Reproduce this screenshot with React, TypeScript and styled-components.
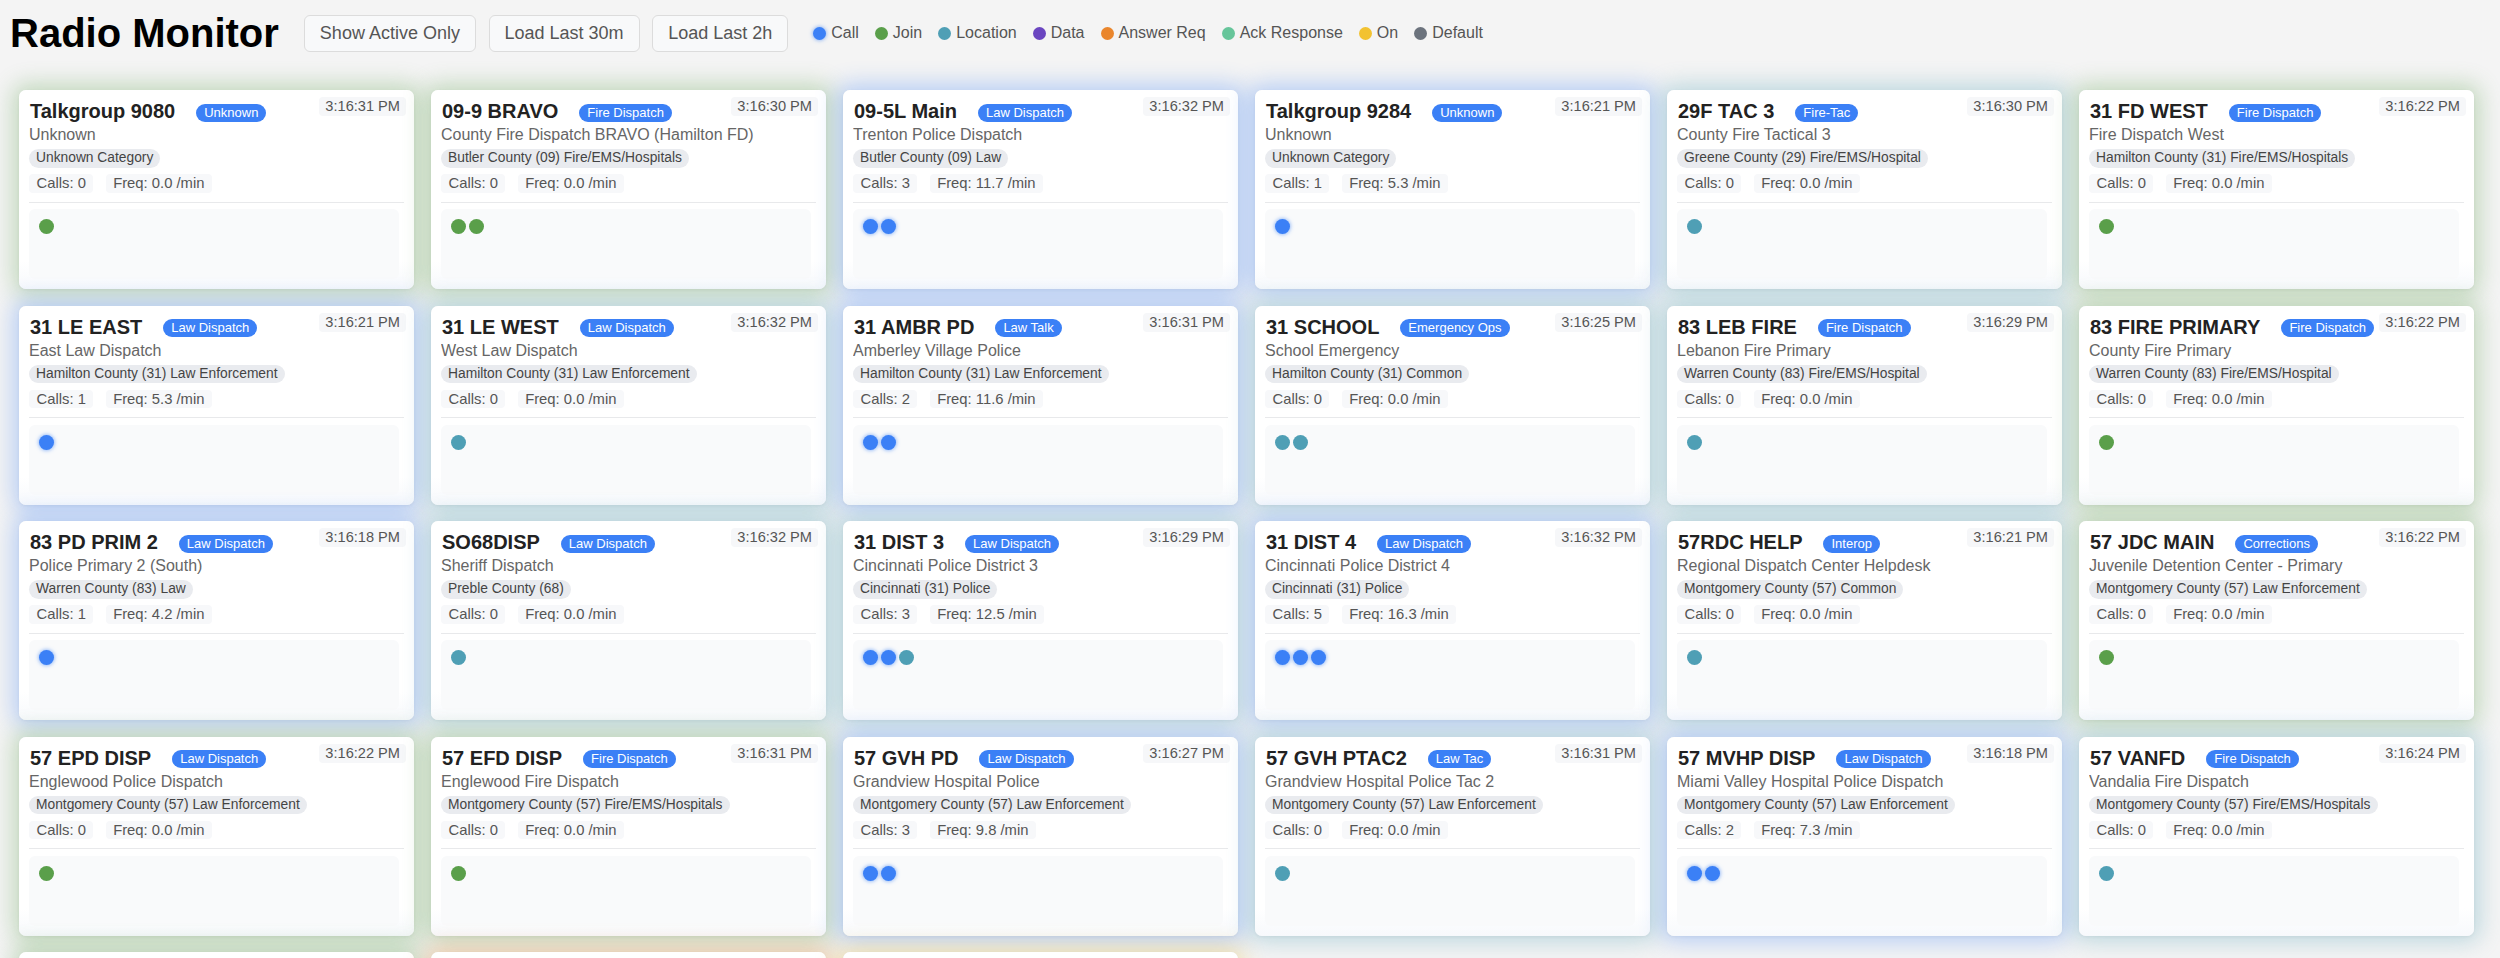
import React from "react";
import styled, { createGlobalStyle } from "styled-components";

const GlobalStyle = createGlobalStyle`
  html, body {
    margin: 0;
    padding: 0;
    background: #f4f4f4;
    font-family: "Liberation Sans", Arial, Helvetica, sans-serif;
  }
  * { box-sizing: border-box; }
`;

type EventKind = "call" | "join" | "location" | "data" | "answer" | "ack" | "on" | "def";

const EVENT_COLORS: Record<EventKind, string> = {
  call: "#3b80f6",
  join: "#5a9f4a",
  location: "#4f9fb5",
  data: "#6a45c0",
  answer: "#ea862c",
  ack: "#66c59a",
  on: "#f2c230",
  def: "#6c737d",
};

const LEGEND: { kind: EventKind; label: string }[] = [
  { kind: "call", label: "Call" },
  { kind: "join", label: "Join" },
  { kind: "location", label: "Location" },
  { kind: "data", label: "Data" },
  { kind: "answer", label: "Answer Req" },
  { kind: "ack", label: "Ack Response" },
  { kind: "on", label: "On" },
  { kind: "def", label: "Default" },
];

function rgba(hex: string, a: number) {
  const n = parseInt(hex.slice(1), 16);
  return `rgba(${(n >> 16) & 255}, ${(n >> 8) & 255}, ${n & 255}, ${a})`;
}

interface Group {
  name: string;
  tag: string;
  time: string;
  desc: string;
  category: string;
  calls: number;
  freq: string;
  events: EventKind[];
}

const GROUPS: Group[] = [
  { name: "Talkgroup 9080", tag: "Unknown", time: "3:16:31 PM", desc: "Unknown", category: "Unknown Category", calls: 0, freq: "0.0", events: ["join"] },
  { name: "09-9 BRAVO", tag: "Fire Dispatch", time: "3:16:30 PM", desc: "County Fire Dispatch BRAVO (Hamilton FD)", category: "Butler County (09) Fire/EMS/Hospitals", calls: 0, freq: "0.0", events: ["join", "join"] },
  { name: "09-5L Main", tag: "Law Dispatch", time: "3:16:32 PM", desc: "Trenton Police Dispatch", category: "Butler County (09) Law", calls: 3, freq: "11.7", events: ["call", "call"] },
  { name: "Talkgroup 9284", tag: "Unknown", time: "3:16:21 PM", desc: "Unknown", category: "Unknown Category", calls: 1, freq: "5.3", events: ["call"] },
  { name: "29F TAC 3", tag: "Fire-Tac", time: "3:16:30 PM", desc: "County Fire Tactical 3", category: "Greene County (29) Fire/EMS/Hospital", calls: 0, freq: "0.0", events: ["location"] },
  { name: "31 FD WEST", tag: "Fire Dispatch", time: "3:16:22 PM", desc: "Fire Dispatch West", category: "Hamilton County (31) Fire/EMS/Hospitals", calls: 0, freq: "0.0", events: ["join"] },

  { name: "31 LE EAST", tag: "Law Dispatch", time: "3:16:21 PM", desc: "East Law Dispatch", category: "Hamilton County (31) Law Enforcement", calls: 1, freq: "5.3", events: ["call"] },
  { name: "31 LE WEST", tag: "Law Dispatch", time: "3:16:32 PM", desc: "West Law Dispatch", category: "Hamilton County (31) Law Enforcement", calls: 0, freq: "0.0", events: ["location"] },
  { name: "31 AMBR PD", tag: "Law Talk", time: "3:16:31 PM", desc: "Amberley Village Police", category: "Hamilton County (31) Law Enforcement", calls: 2, freq: "11.6", events: ["call", "call"] },
  { name: "31 SCHOOL", tag: "Emergency Ops", time: "3:16:25 PM", desc: "School Emergency", category: "Hamilton County (31) Common", calls: 0, freq: "0.0", events: ["location", "location"] },
  { name: "83 LEB FIRE", tag: "Fire Dispatch", time: "3:16:29 PM", desc: "Lebanon Fire Primary", category: "Warren County (83) Fire/EMS/Hospital", calls: 0, freq: "0.0", events: ["location"] },
  { name: "83 FIRE PRIMARY", tag: "Fire Dispatch", time: "3:16:22 PM", desc: "County Fire Primary", category: "Warren County (83) Fire/EMS/Hospital", calls: 0, freq: "0.0", events: ["join"] },

  { name: "83 PD PRIM 2", tag: "Law Dispatch", time: "3:16:18 PM", desc: "Police Primary 2 (South)", category: "Warren County (83) Law", calls: 1, freq: "4.2", events: ["call"] },
  { name: "SO68DISP", tag: "Law Dispatch", time: "3:16:32 PM", desc: "Sheriff Dispatch", category: "Preble County (68)", calls: 0, freq: "0.0", events: ["location"] },
  { name: "31 DIST 3", tag: "Law Dispatch", time: "3:16:29 PM", desc: "Cincinnati Police District 3", category: "Cincinnati (31) Police", calls: 3, freq: "12.5", events: ["call", "call", "location"] },
  { name: "31 DIST 4", tag: "Law Dispatch", time: "3:16:32 PM", desc: "Cincinnati Police District 4", category: "Cincinnati (31) Police", calls: 5, freq: "16.3", events: ["call", "call", "call"] },
  { name: "57RDC HELP", tag: "Interop", time: "3:16:21 PM", desc: "Regional Dispatch Center Helpdesk", category: "Montgomery County (57) Common", calls: 0, freq: "0.0", events: ["location"] },
  { name: "57 JDC MAIN", tag: "Corrections", time: "3:16:22 PM", desc: "Juvenile Detention Center - Primary", category: "Montgomery County (57) Law Enforcement", calls: 0, freq: "0.0", events: ["join"] },

  { name: "57 EPD DISP", tag: "Law Dispatch", time: "3:16:22 PM", desc: "Englewood Police Dispatch", category: "Montgomery County (57) Law Enforcement", calls: 0, freq: "0.0", events: ["join"] },
  { name: "57 EFD DISP", tag: "Fire Dispatch", time: "3:16:31 PM", desc: "Englewood Fire Dispatch", category: "Montgomery County (57) Fire/EMS/Hospitals", calls: 0, freq: "0.0", events: ["join"] },
  { name: "57 GVH PD", tag: "Law Dispatch", time: "3:16:27 PM", desc: "Grandview Hospital Police", category: "Montgomery County (57) Law Enforcement", calls: 3, freq: "9.8", events: ["call", "call"] },
  { name: "57 GVH PTAC2", tag: "Law Tac", time: "3:16:31 PM", desc: "Grandview Hospital Police Tac 2", category: "Montgomery County (57) Law Enforcement", calls: 0, freq: "0.0", events: ["location"] },
  { name: "57 MVHP DISP", tag: "Law Dispatch", time: "3:16:18 PM", desc: "Miami Valley Hospital Police Dispatch", category: "Montgomery County (57) Law Enforcement", calls: 2, freq: "7.3", events: ["call", "call"] },
  { name: "57 VANFD", tag: "Fire Dispatch", time: "3:16:24 PM", desc: "Vandalia Fire Dispatch", category: "Montgomery County (57) Fire/EMS/Hospitals", calls: 0, freq: "0.0", events: ["location"] },

  { name: "57 MCSO DISP", tag: "Law Dispatch", time: "3:16:20 PM", desc: "Sheriff Dispatch", category: "Montgomery County (57) Law Enforcement", calls: 0, freq: "0.0", events: ["join"] },
  { name: "57 DFD DISP", tag: "Fire Dispatch", time: "3:16:28 PM", desc: "Dayton Fire Dispatch", category: "Montgomery County (57) Fire/EMS/Hospitals", calls: 1, freq: "3.1", events: ["answer"] },
  { name: "57 DPD DISP", tag: "Law Dispatch", time: "3:16:26 PM", desc: "Dayton Police Dispatch", category: "Montgomery County (57) Law Enforcement", calls: 1, freq: "2.8", events: ["on"] },
];

const Page = styled.div`
  padding: 10px;
  min-height: 958px;
`;

const Header = styled.header`
  display: flex;
  align-items: center;
  gap: 25px;
  height: 46px;
`;

const Title = styled.h1`
  margin: 0;
  font-size: 40px;
  line-height: 46px;
  font-weight: 700;
  color: #000;
  white-space: nowrap;
`;

const ButtonGroup = styled.div`
  display: flex;
  gap: 12.6px;
`;

const ToolButton = styled.button`
  font-family: inherit;
  font-size: 18px;
  line-height: 21px;
  padding: 7px 15px;
  border: 1px solid #dcdcdc;
  border-radius: 6px;
  background: #f8f9fa;
  color: #555;
  cursor: pointer;
`;

const Legend = styled.div`
  display: flex;
  align-items: center;
  gap: 16px;
`;

const LegendItem = styled.span`
  display: inline-flex;
  align-items: center;
  gap: 5px;
  font-size: 16px;
  color: #555;
`;

const Dot = styled.span<{ $color: string; $glow: boolean; $size: number }>`
  display: inline-block;
  width: ${(p) => p.$size}px;
  height: ${(p) => p.$size}px;
  border-radius: 50%;
  background: ${(p) => p.$color};
  box-shadow: ${(p) => (p.$glow ? `0 0 4px ${rgba(p.$color, 0.75)}` : "none")};
  flex: none;
`;

const Grid = styled.main`
  display: grid;
  grid-template-columns: repeat(6, 395px);
  column-gap: 17px;
  row-gap: 16.6px;
  margin-top: 34px;
  padding-left: 9px;
`;

const Card = styled.section<{ $glow: string }>`
  position: relative;
  background: linear-gradient(180deg, #ffffff 86%, #f7f9fc 100%);
  border-radius: 7px;
  padding: 10px 10px 10px 10px;
  box-shadow: 0 0 22px 6px ${(p) => rgba(p.$glow, 0.32)}, 0 1px 3px rgba(0, 0, 0, 0.06);
`;

const TitleRow = styled.div`
  display: flex;
  align-items: center;
  height: 23px;
`;

const GroupName = styled.span`
  font-size: 20px;
  line-height: 23px;
  font-weight: 700;
  color: #222;
  white-space: nowrap;
  padding-left: 1px;
`;

const Tag = styled.span`
  margin-left: 21px;
  margin-top: 2px;
  background: #3b80f6;
  color: #fff;
  font-size: 13px;
  line-height: 16px;
  padding: 1px 8px;
  border-radius: 9px;
  white-space: nowrap;
`;

const Time = styled.span`
  position: absolute;
  top: 7px;
  right: 8px;
  font-size: 14.6px;
  line-height: 17px;
  padding: 1px 6px;
  color: #555;
  background: #f6f7f9;
  border-radius: 4px;
`;

const Desc = styled.div`
  margin-top: 3px;
  font-size: 16px;
  line-height: 18.4px;
  color: #666;
  white-space: nowrap;
  overflow: hidden;
  text-overflow: ellipsis;
`;

const ChipRow = styled.div`
  display: flex;
  margin-top: 4.6px;
`;

const Chip = styled.span`
  font-size: 13.8px;
  line-height: 16.7px;
  padding: 1px 7px;
  border-radius: 10px;
  background: #e9ebef;
  color: #444;
  white-space: nowrap;
`;

const Stats = styled.div`
  display: flex;
  gap: 12.3px;
  margin-top: 6.6px;
`;

const Stat = styled.span`
  font-size: 14.8px;
  line-height: 16.4px;
  padding: 1px 7.5px;
  border-radius: 4px;
  background: #f7f8fa;
  color: #555;
  white-space: nowrap;
`;

const Divider = styled.hr`
  border: none;
  height: 1px;
  background: #e8e9eb;
  margin: 9px 0 0 0;
`;

const Timeline = styled.div`
  margin-top: 6.3px;
  height: 70px;
  width: calc(100% - 5px);
  padding: 10px;
  background: #f9fafb;
  border-radius: 6px;
  display: flex;
  align-items: flex-start;
  gap: 3px;
`;

function TalkgroupCard({ g }: { g: Group }) {
  const last = g.events[g.events.length - 1];
  return (
    <Card $glow={EVENT_COLORS[last]}>
      <TitleRow>
        <GroupName>{g.name}</GroupName>
        <Tag>{g.tag}</Tag>
      </TitleRow>
      <Time>{g.time}</Time>
      <Desc>{g.desc}</Desc>
      <ChipRow>
        <Chip>{g.category}</Chip>
      </ChipRow>
      <Stats>
        <Stat>Calls: {g.calls}</Stat>
        <Stat>Freq: {g.freq} /min</Stat>
      </Stats>
      <Divider />
      <Timeline>
        {g.events.map((e, i) => (
          <Dot key={i} $color={EVENT_COLORS[e]} $glow={e === "call"} $size={15} />
        ))}
      </Timeline>
    </Card>
  );
}

export default function App() {
  return (
    <>
      <GlobalStyle />
      <Page>
        <Header>
          <Title>Radio Monitor</Title>
          <ButtonGroup>
            <ToolButton>Show Active Only</ToolButton>
            <ToolButton>Load Last 30m</ToolButton>
            <ToolButton>Load Last 2h</ToolButton>
          </ButtonGroup>
          <Legend>
            {LEGEND.map((l) => (
              <LegendItem key={l.kind}>
                <Dot $color={EVENT_COLORS[l.kind]} $glow={l.kind === "call"} $size={13} />
                {l.label}
              </LegendItem>
            ))}
          </Legend>
        </Header>
        <Grid>
          {GROUPS.map((g) => (
            <TalkgroupCard key={g.name} g={g} />
          ))}
        </Grid>
      </Page>
    </>
  );
}
